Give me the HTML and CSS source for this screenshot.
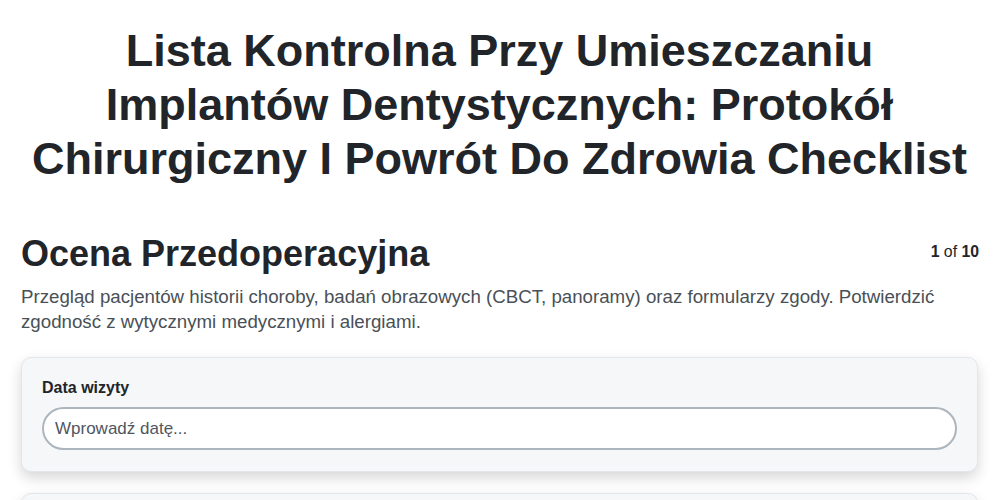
FILE: index.html
```html
<!DOCTYPE html>
<html lang="pl">
<head>
<meta charset="utf-8">
<title>Lista Kontrolna</title>
<link rel="stylesheet" href="styles.css">
</head>
<body>
<main class="page">
  <h1 class="title">Lista Kontrolna Przy Umieszczaniu Implantów Dentystycznych: Protokół Chirurgiczny I Powrót Do Zdrowia Checklist</h1>
  <section class="step">
    <div class="step-head">
      <h2 class="step-title">Ocena Przedoperacyjna</h2>
      <div class="counter"><b>1</b> of <b>10</b></div>
    </div>
    <p class="step-desc">Przegląd pacjentów historii choroby, badań obrazowych (CBCT, panoramy) oraz formularzy zgody. Potwierdzić zgodność z wytycznymi medycznymi i alergiami.</p>
    <div class="card">
      <label class="field-label" for="d">Data wizyty</label>
      <input class="field-input" id="d" type="text" placeholder="Wprowadź datę...">
    </div>
    <div class="card"></div>
  </section>
</main>
</body>
</html>
```
FILE: styles.css
```css
* { box-sizing: border-box; }
body {
  margin: 0;
  font-family: "Liberation Sans", Arial, sans-serif;
  color: #212529;
  background: #fff;
}
.page {
  padding: 24px 22px 20px 21px;
}
.title {
  margin: 0 0 46px;
  text-align: center;
  font-size: 45px;
  line-height: 54px;
  font-weight: 700;
  color: #212529;
}
.step-head {
  display: flex;
  justify-content: space-between;
  align-items: flex-start;
}
.step-title {
  margin: 0;
  font-size: 36px;
  line-height: 43px;
  font-weight: 700;
}
.counter {
  margin-top: 11px;
  margin-right: -1px;
  font-size: 15.8px;
  color: #212529;
}
.step-desc {
  margin: 9px 0 23px;
  font-size: 18.7px;
  line-height: 25px;
  color: #495057;
}
.card {
  background: #f6f7f9;
  border: 1px solid #e3e5ea;
  border-radius: 10px;
  box-shadow: 0 6px 14px rgba(0,0,0,0.16);
  padding: 21px 20px 21px;
  margin-bottom: 21px;
  min-height: 60px;
}
.field-label {
  display: block;
  font-size: 16px;
  line-height: 18px;
  font-weight: 700;
  color: #212529;
  margin-bottom: 10px;
}
.field-input {
  display: block;
  width: 100%;
  height: 43px;
  border: 2px solid #adb5bd;
  border-radius: 22px;
  background: #fff;
  padding: 0 11px;
  font-family: "Liberation Sans", Arial, sans-serif;
  font-size: 17px;
  color: #212529;
}
.field-input::placeholder { color: #4f5661; }
```
